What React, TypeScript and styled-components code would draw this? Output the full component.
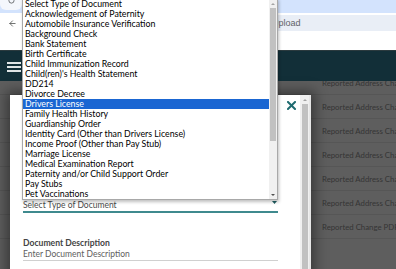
import React from 'react';
import styled, { createGlobalStyle } from 'styled-components';
import { ArrowLeft, RotateCw } from 'lucide-react';

const GlobalStyle = createGlobalStyle`
  html, body {
    margin: 0;
    padding: 0;
  }
  body {
    font-family: Lato, "Liberation Sans", sans-serif;
    background: #ffffff;
  }
`;

const docTypes = [
  'Select Type of Document',
  'Acknowledgement of Paternity',
  'Automobile Insurance Verification',
  'Background Check',
  'Bank Statement',
  'Birth Certificate',
  'Child Immunization Record',
  "Child(ren)'s Health Statement",
  'DD214',
  'Divorce Decree',
  'Drivers License',
  'Family Health History',
  'Guardianship Order',
  'Identity Card (Other than Drivers License)',
  'Income Proof (Other than Pay Stub)',
  'Marriage License',
  'Medical Examination Report',
  'Paternity and/or Child Support Order',
  'Pay Stubs',
  'Pet Vaccinations',
];

const reports = [
  'Reported Address Change',
  'Reported Address Change',
  'Reported Address Change',
  'Reported Address Change',
  'Reported Address Change',
  'Reported Address Change',
  'Reported Change PDF',
];

const SELECTED = 'Drivers License';

export default function App() {
  return (
    <>
      <GlobalStyle />
      <SPage>
        <STabStrip>
          <STab>
            <RotateCw size={7} strokeWidth={2.4} />
          </STab>
        </STabStrip>
        <SToolbar>
          <SBack>
            <ArrowLeft size={9} strokeWidth={2} />
          </SBack>
          <SAddress>Upload</SAddress>
        </SToolbar>
        <SHeader>
          <SBurger>
            <span />
            <span />
            <span />
          </SBurger>
        </SHeader>
        <SContent>
          <SRows>
            {reports.map((r, i) => (
              <SRow key={i}>
                <span />
                <SRowText>{r}</SRowText>
              </SRow>
            ))}
          </SRows>
        </SContent>

        <SModal>
          <SModalBody>
            <SModalHead>
              <SClose aria-label="Close">
                <svg width="9" height="9" viewBox="0 0 9 9">
                  <path d="M1 1 L8 8 M8 1 L1 8" stroke="#1f6b70" strokeWidth="2" strokeLinecap="square" />
                </svg>
              </SClose>
            </SModalHead>
            <SForm>
              <SSelectField>
                <span>Select Type of Document</span>
                <svg width="5" height="4" viewBox="0 0 5 4">
                  <path d="M0 0 H5 L2.5 3 Z" fill="#1f5f63" />
                </svg>
              </SSelectField>
              <SLabel>Document Description</SLabel>
              <SInput>Enter Document Description</SInput>
            </SForm>
          </SModalBody>
          <SModalScroll>
            <SArrowUp />
            <SModalThumb />
          </SModalScroll>
        </SModal>

        <SDropList>
          <SOptions>
            {docTypes.map((d) => (
              <SOption key={d} $active={d === SELECTED}>
                {d}
              </SOption>
            ))}
          </SOptions>
          <SListScroll>
            <SArrowUp />
            <STrack>
              <SThumb />
            </STrack>
            <SArrowDown />
          </SListScroll>
        </SDropList>
      </SPage>
    </>
  );
}

const SPage = styled.div`
  position: relative;
  width: 396px;
  height: 269px;
  overflow: hidden;
  display: flex;
  flex-direction: column;
`;

const STabStrip = styled.div`
  height: 13px;
  background: #d3e3fd;
  display: flex;
  flex-shrink: 0;
`;

const STab = styled.div`
  width: 22px;
  height: 13px;
  background: #f4f7fc;
  border-radius: 0 0 6px 6px;
  display: flex;
  justify-content: center;
  align-items: flex-start;
  color: #3c4043;
  margin-top: -4px;
  padding-top: 1px;
`;

const SToolbar = styled.div`
  height: 38px;
  flex-shrink: 0;
  background: #ffffff;
  border-top: 2px solid #ffffff;
  box-sizing: border-box;
  display: flex;
  align-items: flex-start;
  border-bottom: 1px solid #2b3a3e;
`;

const SBack = styled.div`
  width: 24px;
  height: 16px;
  display: flex;
  align-items: center;
  justify-content: center;
  color: #444746;
`;

const SAddress = styled.div`
  flex: 1;
  height: 16px;
  margin-left: 10px;
  background: #e9eef6;
  border-radius: 8px 0 0 8px;
  font-size: 9px;
  line-height: 16px;
  color: #5f6368;
  padding-left: 238px;
  font-family: "Liberation Sans", Arial, sans-serif;
`;

const SHeader = styled.header`
  height: 30px;
  flex-shrink: 0;
  background: #122f38;
  display: flex;
  align-items: center;
  padding-left: 7px;
`;

const SBurger = styled.div`
  display: flex;
  flex-direction: column;
  gap: 2px;
  margin-top: 2px;

  & > span {
    display: block;
    width: 14px;
    height: 2px;
    background: #dfe5e6;
  }
`;

const SContent = styled.main`
  flex: 1;
  background: #5e5e5e;
  overflow: hidden;
`;

const SRows = styled.div`
  margin-top: -10px;
`;

const SRow = styled.div`
  display: grid;
  grid-template-columns: 322px 74px;
  height: 23px;
  align-items: center;
  border-bottom: 1px solid #565656;
`;

const SRowText = styled.span`
  font-size: 7.8px;
  color: #353535;
  white-space: nowrap;
  overflow: hidden;
`;

const SModal = styled.div`
  position: absolute;
  left: 10px;
  top: 95px;
  width: 299px;
  height: 200px;
  background: #ffffff;
  display: grid;
  grid-template-columns: 1fr 9px;
  border-right: 2px solid #e6e6e6;
  box-shadow: 0 0 12px 4px rgba(0, 0, 0, 0.4);
`;

const SModalBody = styled.div`
  display: flex;
  flex-direction: column;
`;

const SModalHead = styled.div`
  height: 15px;
  display: flex;
  justify-content: flex-end;
  align-items: flex-end;
  padding-right: 4px;
`;

const SClose = styled.button`
  border: 0;
  background: none;
  padding: 0;
  width: 9px;
  height: 9px;
  display: flex;
`;

const SForm = styled.div`
  padding: 0 22px 0 13px;
  display: flex;
  flex-direction: column;
`;

const SSelectField = styled.div`
  margin-top: 90px;
  display: flex;
  justify-content: space-between;
  align-items: flex-start;
  font-size: 8.5px;
  line-height: 10px;
  color: #4a4a4a;
  padding-bottom: 1px;
  border-bottom: 2px solid #3f8a8e;

  & > svg {
    margin: 1px 1px 0 0;
  }
`;

const SLabel = styled.div`
  margin-top: 25px;
  font-size: 8.6px;
  line-height: 10px;
  font-weight: 700;
  color: #444444;
`;

const SInput = styled.div`
  margin-top: 1px;
  font-size: 8.5px;
  line-height: 10px;
  color: #5e5e5e;
  padding-bottom: 1px;
  border-bottom: 1px solid #d0d0d0;
`;

const SModalScroll = styled.div`
  background: #f0f0f0;
  display: flex;
  flex-direction: column;
  align-items: center;
`;

const SArrowUp = styled.div`
  height: 9px;
  width: 100%;
  flex-shrink: 0;
  display: flex;
  justify-content: center;
  align-items: center;

  &::after {
    content: '';
    border-left: 2px solid transparent;
    border-right: 2px solid transparent;
    border-bottom: 2px solid #a3a3a3;
  }
`;

const SArrowDown = styled(SArrowUp)`
  &::after {
    border-bottom: 0;
    border-top: 2px solid #505050;
  }
`;

const SModalThumb = styled.div`
  width: 6px;
  flex: 1;
  background: #c1c1c1;
`;

const SDropList = styled.div`
  position: absolute;
  left: 22px;
  top: -2px;
  width: 256px;
  box-sizing: border-box;
  border: 1px solid #a8a8a8;
  background: #ffffff;
  display: flex;
  box-shadow: 1px 2px 3px rgba(0, 0, 0, 0.25);
`;

const SOptions = styled.div`
  flex: 1;
  display: flex;
  flex-direction: column;
`;

const SOption = styled.div<{ $active?: boolean }>`
  height: 10px;
  line-height: 10px;
  font-size: 8.8px;
  padding-left: 2px;
  white-space: nowrap;
  color: ${(p) => (p.$active ? '#ffffff' : '#000000')};
  background: ${(p) => (p.$active ? '#1a66d2' : 'transparent')};
`;

const SListScroll = styled.div`
  width: 8px;
  background: #f0f0f0;
  display: flex;
  flex-direction: column;
`;

const STrack = styled.div`
  flex: 1;
  display: flex;
  justify-content: center;
`;

const SThumb = styled.div`
  width: 6px;
  height: 133px;
  background: #c1c1c1;
`;
